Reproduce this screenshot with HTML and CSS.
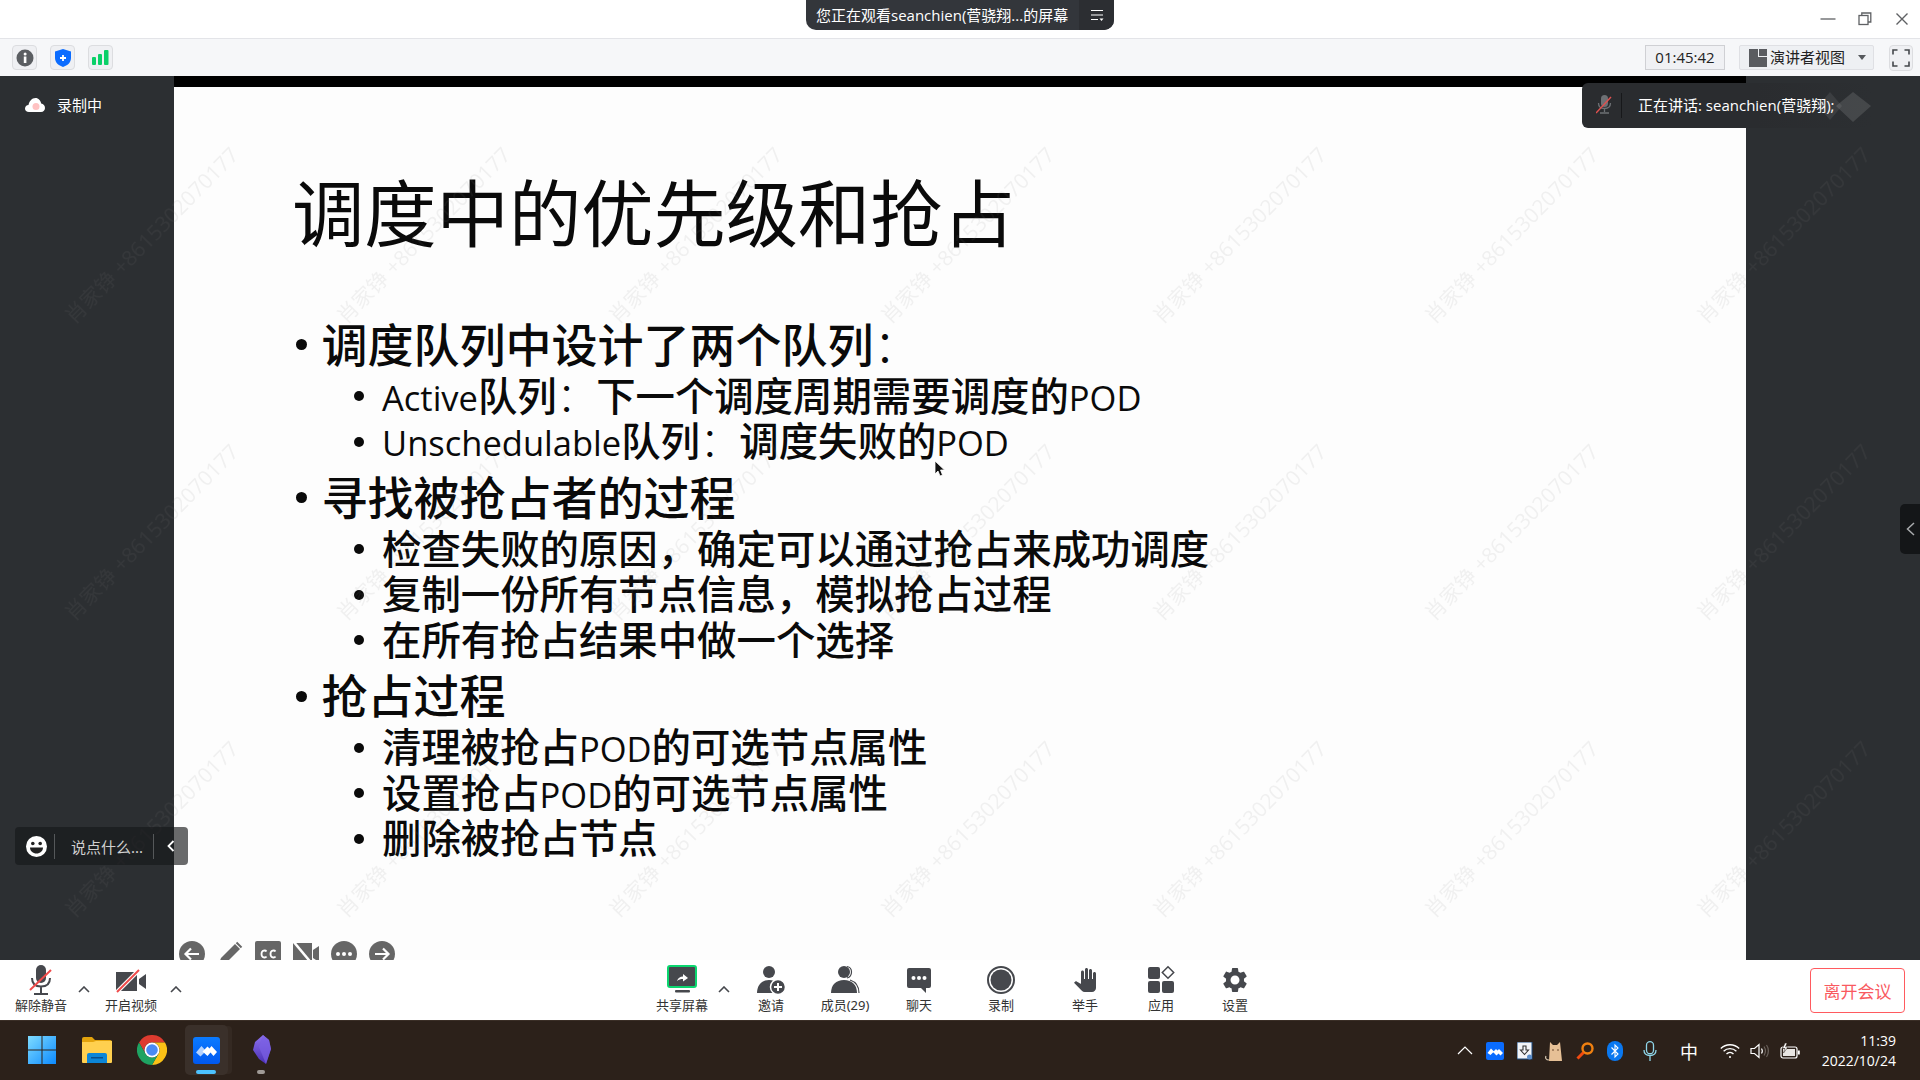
FILE: index.html
```html
<!DOCTYPE html>
<html lang="zh-CN">
<head>
<meta charset="utf-8">
<title>腾讯会议</title>
<link rel="stylesheet" href="styles.css">
</head>
<body>
<div class="app">
  <header class="titlebar">
    <div class="banner">
      <span class="banner-text">您正在观看seanchien(菅骁翔...的屏幕</span>
      <span class="banner-menu">
        <svg width="14" height="14" viewBox="0 0 14 14"><path d="M1 2.5h12M1 7h12M1 11.5h7" stroke="#fff" stroke-width="1.2" fill="none"/><path d="M9.5 10.5h4l-2 2.5z" fill="#fff"/></svg>
      </span>
    </div>
    <div class="win-controls">
      <span class="win-cell"><svg width="16" height="16" viewBox="0 0 16 16"><path d="M0.5 8h15" stroke="#5f6164" stroke-width="1.3"/></svg></span>
      <span class="win-cell"><svg width="14" height="14" viewBox="0 0 14 14" fill="none" stroke="#5f6164" stroke-width="1.3"><rect x="1" y="3.5" width="9" height="9"/><path d="M3.8 3.5V1h9v9h-2.8"/></svg></span>
      <span class="win-cell"><svg width="14" height="14" viewBox="0 0 14 14"><path d="M1.5 1.5l11 11M12.5 1.5l-11 11" stroke="#5f6164" stroke-width="1.4"/></svg></span>
    </div>
  </header>

  <div class="toolbar-top">
    <span class="square-btn"><svg width="18" height="18" viewBox="0 0 18 18"><circle cx="9" cy="9" r="8.5" fill="#5b5e62"/><rect x="7.8" y="7.5" width="2.6" height="6.5" fill="#fff"/><circle cx="9.1" cy="5" r="1.5" fill="#fff"/></svg></span>
    <span class="square-btn"><svg width="16" height="18" viewBox="0 0 16 18"><path d="M8 0l8 2.5V9c0 4.5-3.5 7.5-8 9-4.500-1.500-8-4.500-8-9V2.500z" fill="#0b6cff"/><path d="M8 6v6M5 9h6" stroke="#fff" stroke-width="1.800"/></svg></span>
    <span class="square-btn"><svg width="17" height="15" viewBox="0 0 17 15" fill="#0ad068"><rect x="0" y="7" width="4" height="8" rx="1"/><rect x="6" y="4" width="4" height="11" rx="1"/><rect x="12" y="0" width="4.500" height="15" rx="1"/></svg></span>
    <span class="timer">01:45:42</span>
    <span class="view-btn">
      <svg width="18" height="18" viewBox="0 0 18 18" fill="#5a5c60"><path d="M0 0h9v8h9v10H0z"/><rect x="10" y="0" width="8" height="7"/></svg>
      <span class="view-label">演讲者视图</span>
      <svg class="view-caret" width="8" height="5" viewBox="0 0 8 5"><path d="M0 0h8L4 5z" fill="#55585c"/></svg>
    </span>
    <span class="full-btn"><svg width="18" height="18" viewBox="0 0 18 18" fill="none" stroke="#44474b" stroke-width="1.600"><path d="M1 5.500V1h4.500M12.500 1H17v4.500M17 12.500V17h-4.500M5.500 17H1v-4.500"/></svg></span>
  </div>

  <main class="stage">
    <aside class="side">
      <div class="rec-status">
        <svg width="20" height="14" viewBox="0 0 20 14"><path d="M4 14C1.500 14 0 12.500 0 10.500S1.500 7.200 3.500 7C4 3.500 6.800 0 10.500 0c3 0 5.200 2.500 5.700 5.500 2.200.3 3.800 2.200 3.800 4.500 0 2.300-1.500 4-4 4z" fill="#fff"/><circle cx="11" cy="8.500" r="3.500" fill="#ffc2c2"/></svg>
        <span>录制中</span>
      </div>
    </aside>

    <section class="slide">
      <div class="slide-band"></div>
      <div class="slide-body">
        <h1 class="slide-title">调度中的优先级和抢占</h1>
        <ul class="points">
          <li class="lv1"><span>调度队列中设计了两个队列<span class="tc">：</span></span></li>
          <li class="lv2"><span><span class="lat">Active</span>队列<span class="tc">：</span>下一个调度周期需要调度的<span class="lat">POD</span></span></li>
          <li class="lv2"><span><span class="lat">Unschedulable</span>队列<span class="tc">：</span>调度失败的<span class="lat">POD</span></span></li>
          <li class="lv1 spaced"><span>寻找被抢占者的过程</span></li>
          <li class="lv2"><span>检查失败的原因，确定可以通过抢占来成功调度</span></li>
          <li class="lv2"><span>复制一份所有节点信息，模拟抢占过程</span></li>
          <li class="lv2"><span>在所有抢占结果中做一个选择</span></li>
          <li class="lv1 spaced"><span>抢占过程</span></li>
          <li class="lv2"><span>清理被抢占<span class="lat">POD</span>的可选节点属性</span></li>
          <li class="lv2"><span>设置抢占<span class="lat">POD</span>的可选节点属性</span></li>
          <li class="lv2"><span>删除被抢占节点</span></li>
        </ul>
      </div>
      <div class="slide-tools">
        <span class="st-cell"><svg width="26" height="26" viewBox="0 0 26 26"><circle cx="13" cy="13" r="13" fill="#666"/><path d="M20 13H7M12 7.500L6.500 13l5.500 5.500" stroke="#fff" stroke-width="2.200" fill="none"/></svg></span>
        <span class="st-cell"><svg width="26" height="26" viewBox="0 0 26 26"><path d="M1 25l3-8L18 3l5 5L9 22z" fill="#666"/><path d="M19.500 1.500l5 5" stroke="#666" stroke-width="2"/></svg></span>
        <span class="st-cell"><svg width="26" height="26" viewBox="0 0 26 26"><rect width="26" height="26" rx="2" fill="#666"/><path d="M11.500 10.500c-1-1.500-5-1.500-5 2.500s4 4 5 2.500M20.500 10.500c-1-1.500-5-1.500-5 2.500s4 4 5 2.500" stroke="#fff" stroke-width="1.800" fill="none"/></svg></span>
        <span class="st-cell"><svg width="26" height="26" viewBox="0 0 26 26" fill="#666"><path d="M0 2h19v22H0z"/><path d="M20 9l6-4v16l-6-4z"/><path d="M0 0l20 24" stroke="#fff" stroke-width="2.500"/></svg></span>
        <span class="st-cell"><svg width="26" height="26" viewBox="0 0 26 26"><circle cx="13" cy="13" r="13" fill="#666"/><circle cx="7" cy="13" r="2" fill="#fff"/><circle cx="13" cy="13" r="2" fill="#fff"/><circle cx="19" cy="13" r="2" fill="#fff"/></svg></span>
        <span class="st-cell"><svg width="26" height="26" viewBox="0 0 26 26"><circle cx="13" cy="13" r="13" fill="#666"/><path d="M6 13h13M14 7.500l5.500 5.500-5.500 5.500" stroke="#fff" stroke-width="2.200" fill="none"/></svg></span>
      </div>
      <svg class="cursor" width="12" height="18" viewBox="0 0 12 18"><path d="M1 1v13l3-3 2 5 2.500-1-2-5h4z" fill="#111" stroke="#fff" stroke-width=".8"/></svg>
    </section>

    <aside class="side"></aside>

    <svg class="watermark" width="1920" height="884">
      <defs>
        <pattern id="wm" x="49" y="29" width="272" height="297" patternUnits="userSpaceOnUse">
          <text class="wm-text" transform="translate(25 220) rotate(-45.500)">肖家铮 +8615302070177</text>
        </pattern>
      </defs>
      <rect width="1920" height="884" fill="url(#wm)"/>
    </svg>

    <div class="speaker-tip">
      <svg width="16" height="19" viewBox="0 0 16 19"><rect x="5" y="0" width="7" height="12" rx="3.500" fill="#6d7074"/><path d="M2.500 8c0 3.500 2.500 5.500 6 5.500s6-2 6-5.500M8.500 13.500V17M4 18h9" stroke="#6d7074" stroke-width="1.300" fill="none"/><path d="M0 18L15 2" stroke="#e2504f" stroke-width="1.400"/></svg>
      <span class="tip-sep"></span>
      <span class="tip-text">正在讲话: seanchien(菅骁翔);</span>
    </div>
    <svg class="tip-logo" width="60" height="30" viewBox="0 0 60 30"><path d="M17 0L29 14 17 28 5 14z" fill="#fff" opacity=".08"/><path d="M40 0L58 14 40 30 23 14z" fill="#fff" opacity=".12"/></svg>

    <div class="chat-bar">
      <svg width="21" height="21" viewBox="0 0 21 21"><circle cx="10.500" cy="10.500" r="10.500" fill="#fff"/><circle cx="6.800" cy="7.500" r="1.800" fill="#222"/><circle cx="14.200" cy="7.500" r="1.800" fill="#222"/><path d="M4 11.500h13c0 3.500-3 6-6.500 6S4 15 4 11.500z" fill="#222"/></svg>
      <span class="chat-sep"></span>
      <span class="chat-text">说点什么...</span>
      <span class="chat-sep"></span>
      <svg class="chat-chev" width="8" height="12" viewBox="0 0 8 12"><path d="M6.500 1L1.500 6l5 5" stroke="#fff" stroke-width="1.800" fill="none"/></svg>
    </div>

    <div class="side-tab"><svg width="9" height="14" viewBox="0 0 9 14"><path d="M8 1L1.500 7 8 13" stroke="#a9abad" stroke-width="1.500" fill="none"/></svg></div>
  </main>

  <nav class="toolbar-bottom">
    <div class="tb-left">
      <div class="tool">
        <svg width="24" height="30" viewBox="0 0 24 30"><rect x="7" y="0" width="10" height="18" rx="5" fill="#46484d"/><path d="M3 13c0 6 4 8.500 9 8.500s9-2.500 9-8.500M12 21.500V28M5 29h14" stroke="#46484d" stroke-width="2" fill="none"/><path d="M1 25L22 5" stroke="#f04a4a" stroke-width="2"/></svg>
        <span class="tool-label">解除静音</span>
      </div>
      <svg class="chev" width="12" height="7" viewBox="0 0 12 7"><path d="M1 6l5-5 5 5" stroke="#46484d" stroke-width="1.600" fill="none"/></svg>
      <div class="tool">
        <svg width="32" height="30" viewBox="0 0 32 30"><path d="M1 7h21v19H1z" fill="#46484d"/><path d="M24 14l7-5v15l-7-5z" fill="#46484d"/><path d="M2 27L24 5" stroke="#fff" stroke-width="4"/><path d="M2 27L24 5" stroke="#f04a4a" stroke-width="2"/></svg>
        <span class="tool-label">开启视频</span>
      </div>
      <svg class="chev" width="12" height="7" viewBox="0 0 12 7"><path d="M1 6l5-5 5 5" stroke="#46484d" stroke-width="1.600" fill="none"/></svg>
    </div>

    <div class="tb-center">
      <div class="tool">
        <svg width="30" height="30" viewBox="0 0 30 30"><rect x="1" y="1" width="28" height="21" rx="2" fill="#46484d" stroke="#0bd66f" stroke-width="2"/><path d="M10 16c1-3 3-4.500 6-4.500V9l5 4-5 3.500V14c-2.500 0-4 .5-6 2z" fill="#fff"/><rect x="8" y="25" width="15" height="2.500" rx="1" fill="#46484d"/></svg>
        <span class="tool-label">共享屏幕</span>
      </div>
      <svg class="chev" width="12" height="7" viewBox="0 0 12 7"><path d="M1 6l5-5 5 5" stroke="#46484d" stroke-width="1.600" fill="none"/></svg>
      <div class="tool">
        <svg width="30" height="30" viewBox="0 0 30 30"><circle cx="13" cy="7" r="6" fill="#46484d"/><path d="M1 28c0-8 5-13 12-13s12 5 12 13z" fill="#46484d"/><circle cx="22" cy="22" r="7.500" fill="#46484d" stroke="#fff" stroke-width="1.500"/><path d="M22 18v8M18 22h8" stroke="#fff" stroke-width="2"/></svg>
        <span class="tool-label">邀请</span>
      </div>
      <div class="tool">
        <svg width="30" height="30" viewBox="0 0 30 30"><path d="M17 1.500c6 1 6 10 0 11.500M20 15c6 2 9 7 9 13" stroke="#46484d" stroke-width="1.200" fill="none"/><circle cx="14" cy="7" r="6" fill="#46484d"/><path d="M1 28c0-8 5-13 13-13s13 5 13 13z" fill="#46484d"/></svg>
        <span class="tool-label">成员(29)</span>
      </div>
      <div class="tool">
        <svg width="26" height="30" viewBox="0 0 26 30"><path d="M3 3h20a2 2 0 012 2v16a2 2 0 01-2 2h-3v5l-5-5H3a2 2 0 01-2-2V5a2 2 0 012-2z" fill="#46484d"/><circle cx="7.500" cy="13" r="2" fill="#fff"/><circle cx="13" cy="13" r="2" fill="#fff"/><circle cx="18.500" cy="13" r="2" fill="#fff"/></svg>
        <span class="tool-label">聊天</span>
      </div>
      <div class="tool">
        <svg width="30" height="30" viewBox="0 0 30 30"><circle cx="15" cy="15" r="13" fill="none" stroke="#46484d" stroke-width="2"/><circle cx="15" cy="15" r="10.500" fill="#46484d"/></svg>
        <span class="tool-label">录制</span>
      </div>
      <div class="tool">
        <svg width="24" height="30" viewBox="0 0 24 24" preserveAspectRatio="xMidYMid meet"><path d="M23 5.500V20c0 2.200-1.800 4-4 4h-7.300c-1.080 0-2.100-.43-2.850-1.190L1 14.830s1.260-1.230 1.300-1.250c.22-.19.490-.29.790-.29.220 0 .420.060.600.160.040.010 4.310 2.460 4.310 2.460V4c0-.83.670-1.500 1.500-1.500S11 3.170 11 4v7h1V1.500c0-.83.670-1.500 1.500-1.500S15 .67 15 1.500V11h1V2.500c0-.83.670-1.500 1.500-1.500s1.500.67 1.500 1.500V11h1V5.500c0-.83.670-1.500 1.500-1.500s1.500.67 1.500 1.500z" fill="#46484d"/></svg>
        <span class="tool-label">举手</span>
      </div>
      <div class="tool">
        <svg width="28" height="30" viewBox="0 0 28 30" fill="#46484d"><rect x="1" y="2" width="12" height="12" rx="2"/><rect x="1" y="16" width="12" height="12" rx="2"/><rect x="15" y="16" width="12" height="12" rx="2"/><path d="M21 1.800L26.700 7.500 21 13.200 15.300 7.500z" fill="none" stroke="#46484d" stroke-width="1.500"/></svg>
        <span class="tool-label">应用</span>
      </div>
      <div class="tool">
        <svg width="30" height="30" viewBox="0 0 24 24"><path fill="#46484d" d="M19.140 12.940c.04-.3.060-.61.060-.94 0-.32-.02-.64-.07-.94l2.030-1.580c.18-.14.230-.41.120-.61l-1.920-3.320c-.12-.22-.37-.29-.59-.22l-2.390.96c-.5-.38-1.030-.7-1.620-.94l-.36-2.540c-.04-.24-.24-.41-.48-.41h-3.840c-.24 0-.43.170-.47.410l-.36 2.540c-.59.240-1.130.570-1.620.940l-2.390-.96c-.22-.08-.47 0-.59.220L2.740 8.870c-.12.210-.08.470.12.610l2.030 1.580c-.05.300-.09.630-.09.940s.02.640.07.940l-2.030 1.580c-.18.140-.23.410-.12.610l1.920 3.320c.12.220.37.290.59.220l2.390-.96c.5.380 1.030.7 1.620.94l.36 2.540c.05.240.24.410.48.410h3.840c.24 0 .44-.17.47-.41l.36-2.540c.59-.24 1.130-.56 1.620-.94l2.390.96c.22.080.47 0 .59-.22l1.920-3.320c.12-.22.070-.47-.12-.61l-2.010-1.580zM12 15.600c-1.980 0-3.600-1.620-3.600-3.600s1.620-3.600 3.600-3.600 3.600 1.620 3.600 3.600-1.620 3.600-3.600 3.600z"/></svg>
        <span class="tool-label">设置</span>
      </div>
    </div>

    <button class="leave">离开会议</button>
  </nav>

  <footer class="taskbar">
    <div class="task-apps">
      <span class="task-cell">
        <svg width="30" height="30" viewBox="0 0 30 30"><defs><linearGradient id="win" x1="0" y1="0" x2="1" y2="1"><stop offset="0" stop-color="#7fdcff"/><stop offset="1" stop-color="#0c8aff"/></linearGradient></defs><path fill="url(#win)" d="M1 1h13.500v13.500H1zM15.500 1H29v13.500H15.500zM1 15.500h13.500V29H1zM15.500 15.500H29V29H15.500z"/></svg>
      </span>
      <span class="task-cell">
        <svg width="30" height="28" viewBox="0 0 30 28"><path d="M0 3a2 2 0 012-2h8l3 3h15a2 2 0 012 2v5H0z" fill="#e3a30c"/><path d="M0 6h11l3-1h16v21a1 1 0 01-1 1H1a1 1 0 01-1-1z" fill="#ffd04f"/><path d="M5 27v-8a2 2 0 012-2h16a2 2 0 012 2v8z" fill="#0c86d8"/><rect x="9" y="21" width="12" height="1.500" fill="#0a4f8c"/></svg>
      </span>
      <span class="task-cell">
        <svg width="30" height="30" viewBox="0 0 30 30"><path d="M2 7.500A15 15 0 0128 7.500L15 7.500A7.500 7.500 0 008.500 18.750z" fill="#dd3b2f"/><path d="M28 7.500A15 15 0 0115 30L21.500 18.750A7.500 7.500 0 0015 7.500z" fill="#fbc116"/><path d="M15 30A15 15 0 012 7.500L8.500 18.750A7.500 7.500 0 0021.500 18.750z" fill="#1ea362"/><circle cx="15" cy="15" r="7.500" fill="#fff"/><circle cx="15" cy="15" r="5.800" fill="#4a8af4"/></svg>
      </span>
      <span class="task-cell">
        <span class="task-active"></span>
        <svg class="task-logo" width="27" height="27" viewBox="0 0 27 27"><defs><linearGradient id="tm" x1="0" y1="0" x2="0" y2="1"><stop offset="0" stop-color="#0a7bff"/><stop offset="1" stop-color="#0058f0"/></linearGradient></defs><rect width="27" height="27" rx="3" fill="url(#tm)"/><path d="M3 15.500L8.500 9l4.500 5-5.500 5.500z" fill="#fff" opacity=".7"/><path d="M9.500 14.500L14.500 9.500l2 2 2-2.500 5.500 6-3.500 4-3-3.500-3 3.500z" fill="#fff"/></svg>
        <span class="task-mark mark-blue"></span>
      </span>
      <span class="task-cell">
        <svg width="20" height="30" viewBox="0 0 20 30"><defs><linearGradient id="ob" x1="0" y1="0" x2="0" y2="1"><stop offset="0" stop-color="#8d72ee"/><stop offset="1" stop-color="#4a2fb5"/></linearGradient></defs><path d="M11 0l6 5 2 9-5 15-7-5-6-9 2-8z" fill="url(#ob)"/><path d="M11 0l-4 12 7 17 5-15-2-9z" fill="#7a5fe4" opacity=".7"/></svg>
        <span class="task-mark mark-gray"></span>
      </span>
    </div>

    <div class="tray">
      <span class="tray-cell"><svg width="16" height="9" viewBox="0 0 16 9"><path d="M1 8l7-7 7 7" stroke="#fff" stroke-width="1.200" fill="none"/></svg></span>
      <span class="tray-cell"><svg width="18" height="18" viewBox="0 0 18 18"><rect width="18" height="18" rx="2" fill="#0a6cff"/><path d="M1.500 11L5 6.500l3 3-3.500 3.500zM7 10l3-3 1.500 1.500L13 7l4 4-2.500 2.500-2-2-2 2z" fill="#fff"/></svg></span>
      <span class="tray-cell"><svg width="16" height="18" viewBox="0 0 16 18"><rect width="15" height="17" fill="#f3f5f8" stroke="#1a4a80"/><path d="M6 4h3v4h2.500L7.500 12.500 3.500 8H6z" fill="none" stroke="#333" stroke-width="1.100"/><circle cx="12.500" cy="15" r="2.500" fill="#5b8ecb"/></svg></span>
      <span class="tray-cell"><svg width="20" height="20" viewBox="0 0 20 20"><path d="M5 1l3 3h4l3-3 2 19H4z" fill="#e6c096"/><circle cx="8" cy="9" r=".8" fill="#5a3a20"/><circle cx="13" cy="9" r=".8" fill="#5a3a20"/><path d="M4 19C1 19 0 17 1 15" stroke="#d8c8b0" stroke-width="1.200" fill="none"/></svg></span>
      <span class="tray-cell"><svg width="18" height="18" viewBox="0 0 18 18"><circle cx="11.500" cy="6.500" r="5" fill="none" stroke="#f08010" stroke-width="2.400"/><path d="M7.500 10.500L1.500 16.500" stroke="#f04a10" stroke-width="3"/></svg></span>
      <span class="tray-cell"><svg width="16" height="20" viewBox="0 0 16 20"><rect width="16" height="20" rx="8" fill="#0a78f0"/><path d="M4.500 6.500L11 13l-3 3V4l3 3-6.500 6.500" stroke="#fff" stroke-width="1.100" fill="none"/></svg></span>
      <span class="tray-cell tray-wide"><svg width="14" height="20" viewBox="0 0 14 20"><rect x="3.500" y=".7" width="7" height="12" rx="3.500" fill="none" stroke="#8fd6ea" stroke-width="1.300"/><path d="M1 9c0 3.500 2.500 5.500 6 5.500s6-2 6-5.500M7 14.500V20" stroke="#8fd6ea" stroke-width="1.300" fill="none"/></svg></span>
      <span class="tray-cell tray-ime">中</span>
      <span class="tray-cell tray-gap"><svg width="20" height="16" viewBox="0 0 20 16" fill="none" stroke="#fff" stroke-width="1.300"><path d="M.8 5.500c5-5 13.400-5 18.400 0M3.600 8.300c3.500-3.500 9.300-3.500 12.800 0M6.500 11c2-2 5-2 7 0"/><circle cx="10" cy="14" r="1" fill="#fff" stroke="none"/></svg></span>
      <span class="tray-cell"><svg width="20" height="16" viewBox="0 0 20 16" fill="none" stroke="#fff" stroke-width="1.200"><path d="M1 5.500h3.500L9 1.500v13l-4.500-4H1z"/><path d="M11.500 5.500c1 1.500 1 3.500 0 5"/><path d="M14 3.500c1.800 2.800 1.800 6.200 0 9M16.500 2c2.500 3.500 2.500 8.500 0 12" stroke="#6b625c"/></svg></span>
      <span class="tray-cell"><svg width="20" height="16" viewBox="0 0 20 16"><rect x="1" y="4" width="16" height="11" rx="2" fill="none" stroke="#fff" stroke-width="1.200"/><rect x="3" y="6" width="12" height="7" fill="#e8e6e3"/><rect x="17.800" y="7.500" width="2" height="4" fill="#fff"/><path d="M5 0L2.500 5.500h2.500L3.500 10 8 4H5.500L7 0z" fill="#fff" stroke="#2c211a" stroke-width=".5"/></svg></span>
    </div>

    <div class="clock">
      <span>11:39</span>
      <span>2022/10/24</span>
    </div>
  </footer>
</div>
</body>
</html>
```
FILE: styles.css
```css
* { box-sizing: border-box; }
html, body { margin: 0; padding: 0; }
body {
  width: 1920px;
  height: 1080px;
  overflow: hidden;
  font-family: "Noto Sans", "Noto Sans CJK SC", sans-serif;
  background: #fff;
}
.app { display: flex; flex-direction: column; width: 1920px; height: 1080px; }

/* title bar */
.titlebar {
  position: relative;
  height: 38px;
  flex: none;
  background: #fff;
  display: flex;
  justify-content: flex-end;
  align-items: center;
}
.banner {
  position: absolute;
  left: 806px;
  top: 0;
  width: 308px;
  height: 30px;
  display: flex;
  background: #33363b;
  border-radius: 0 0 10px 10px;
  overflow: hidden;
  color: #fff;
}
.banner-text {
  flex: 1;
  padding-left: 10px;
  font-size: 15px;
  line-height: 30px;
  white-space: nowrap;
  font-family: "Open Sans", "Noto Sans CJK SC", sans-serif;
}
.banner-menu {
  width: 35px;
  background: #2c2e32;
  display: flex;
  align-items: center;
  justify-content: center;
}
.win-controls { display: flex; padding-bottom: 0; }
.win-cell { width: 37px; height: 38px; display: flex; align-items: center; justify-content: center; }

/* top toolbar */
.toolbar-top {
  height: 38px;
  flex: none;
  background: #f6f7f9;
  border-top: 1px solid #e3e4e8;
  display: flex;
  align-items: center;
  padding: 0 7px 0 12px;
  gap: 13px;
}
.square-btn {
  width: 25px;
  height: 25px;
  border: 1px solid #dcdde0;
  border-radius: 4px;
  background: #eff0f3;
  display: flex;
  align-items: center;
  justify-content: center;
}
.timer {
  margin-left: auto;
  width: 80px;
  height: 25px;
  border: 1px solid #cfd0d4;
  background: #f0f1f4;
  color: #222;
  font-size: 15px;
  line-height: 23px;
  text-align: center;
  font-family: "Open Sans", sans-serif;
}
.view-btn {
  width: 135px;
  height: 25px;
  margin-left: 1px;
  border: 1px solid #dfe0e4;
  border-radius: 2px;
  background: #eef0f3;
  display: flex;
  align-items: center;
  padding-left: 9px;
  color: #222;
}
.view-label { font-size: 15px; line-height: 23px; margin-left: 3px; }
.view-caret { margin-left: 13px; }
.full-btn {
  width: 24px;
  height: 26px;
  margin-left: 2px;
  border: 1px solid #dcdde0;
  border-radius: 4px;
  background: #eff0f3;
  display: flex;
  align-items: center;
  justify-content: center;
}

/* stage */
.stage {
  position: relative;
  flex: none;
  height: 884px;
  display: flex;
  overflow: hidden;
  background: #2c2f32;
}
.side { width: 174px; flex: none; background: #2c2f32; }
.rec-status {
  display: flex;
  align-items: center;
  gap: 12px;
  padding: 19px 0 0 25px;
  color: #fff;
  font-size: 15px;
  line-height: 20px;
}
.slide {
  position: relative;
  width: 1572px;
  flex: none;
  background: #fdfdfd;
}
.slide-band { height: 11px; background: #000; }
.slide-body { padding: 81px 0 0 120px; color: #0a0a0a; }
.slide-title {
  margin: 0 0 54.500px -2px;
  font-size: 72.300px;
  font-weight: 400;
  line-height: 90px;
  white-space: nowrap;
}
.points {
  list-style: none;
  margin: 0;
  padding: 0;
  font-family: "Noto Sans CJK SC", sans-serif;
  font-weight: 500;
}
.lv1, .lv2 { display: flex; align-items: center; white-space: nowrap; }
.lv1 { height: 58px; font-size: 46px; }
.lv2 { height: 45.500px; font-size: 39.400px; padding-left: 58px; }
.lv1::before, .lv2::before {
  content: "";
  flex: none;
  border-radius: 50%;
  background: #0a0a0a;
}
.lv1::before { width: 11px; height: 11px; margin: 6px 14.500px 0 2px; }
.lv2::before { width: 10px; height: 10px; margin: 6px 18px 0 2px; }
.spaced { margin-top: 4px; }
.tc { font-family: "Noto Sans CJK TC", sans-serif; font-weight: 300; }
.lat { font-family: "Open Sans", sans-serif; font-size: 34.500px; font-weight: 500; }

.slide-tools {
  position: absolute;
  left: -1px;
  top: 865px;
  display: flex;
}
.st-cell { width: 38px; display: flex; justify-content: center; }
.cursor { position: absolute; left: 760px; top: 384px; }

.watermark { position: absolute; left: 0; top: 0; pointer-events: none; }
.wm-text {
  font-family: "Open Sans", "Noto Sans CJK SC", sans-serif;
  font-size: 21px;
  fill: rgba(128, 128, 128, 0.1);
}

.speaker-tip {
  position: absolute;
  left: 1582px;
  top: 7px;
  width: 290px;
  height: 45px;
  display: flex;
  align-items: center;
  padding: 0 0 2px 14px;
  border-radius: 6px;
  background: linear-gradient(90deg, #2a2c2f 0, #2a2c2f 60%, rgba(42, 44, 47, 0) 100%);
  color: #fff;
}
.tip-sep { width: 1px; height: 25px; margin: 2px 16px 0 9px; background: #17181a; }
.tip-text {
  font-size: 15px;
  white-space: nowrap;
  font-family: "Open Sans", "Noto Sans CJK SC", sans-serif;
}
.tip-logo { position: absolute; left: 1813px; top: 16px; }

.chat-bar {
  position: absolute;
  left: 15px;
  top: 751px;
  width: 173px;
  height: 38px;
  display: flex;
  align-items: center;
  padding-left: 11px;
  border-radius: 4px;
  background: rgba(22, 24, 25, 0.64);
  color: #d0d0d0;
}
.chat-sep { width: 1px; height: 25px; background: #55585a; margin-left: 7px; }
.chat-text { font-size: 15px; width: 82px; margin-left: 16px; white-space: nowrap; margin-right: -7px; }
.chat-chev { margin-left: 13px; }

.side-tab {
  position: absolute;
  right: 0;
  top: 428px;
  width: 20px;
  height: 50px;
  background: #141618;
  border-radius: 5px 0 0 5px;
  display: flex;
  align-items: center;
  justify-content: center;
}

/* bottom toolbar */
.toolbar-bottom {
  height: 60px;
  flex: none;
  background: #fff;
  display: flex;
  align-items: stretch;
}
.tb-left, .tb-center { display: grid; justify-items: center; align-items: center; }
.tb-left { grid-template-columns: 70px 16px 78px 12px; padding-left: 6px; }
.tb-center { grid-template-columns: 70px 14px 80px 68px 80px 84px 84px 68px 80px; margin-left: 465px; }
.tool { display: flex; flex-direction: column; align-items: center; padding-top: 5px; height: 60px; }
.tool svg { flex: none; height: 30px; }
.tool-label { font-size: 13px; line-height: 18px; margin-top: 1px; color: #333; white-space: nowrap; }
.chev { margin-bottom: 1px; }
.leave {
  margin: 8px 15px 7px auto;
  width: 95px;
  border: 1px solid #ff5a5f;
  border-radius: 4px;
  background: #fff;
  color: #f95a5f;
  font-family: inherit;
  font-size: 17px;
  padding: 0;
}

/* taskbar */
.taskbar {
  height: 60px;
  flex: none;
  display: flex;
  align-items: center;
  padding-right: 24px;
  background: #2c211a;
  border-top: 1px solid #3a2e26;
}
.task-apps { display: flex; padding-left: 14px; height: 100%; }
.task-cell {
  position: relative;
  width: 55px;
  display: flex;
  align-items: center;
  justify-content: center;
  padding-bottom: 1px;
}
.task-active {
  position: absolute;
  left: 6px;
  top: 4px;
  width: 43px;
  height: 50px;
  border-radius: 5px;
  background: rgba(255, 255, 255, 0.07);
  box-shadow: 5px 0 0 -1px rgba(255, 255, 255, 0.04);
}
.task-logo { position: relative; }
.task-mark { position: absolute; top: 49px; height: 4px; border-radius: 2px; }
.mark-blue { left: 17px; width: 20px; background: #4cc2ff; }
.mark-gray { left: 23px; width: 8px; background: #a09a96; }

.tray { display: flex; align-items: center; margin-left: auto; margin-right: 11px; color: #fff; }
.tray-cell { width: 30px; display: flex; align-items: center; justify-content: center; }
.tray-wide { width: 40px; }
.tray-ime { width: 38px; font-size: 18px; }
.tray-gap { margin-left: 7px; }
.clock {
  width: 80px;
  display: flex;
  flex-direction: column;
  align-items: flex-end;
  color: #fff;
  font-size: 14px;
  line-height: 20px;
  font-family: "Open Sans", sans-serif;
  white-space: nowrap;
}
```
